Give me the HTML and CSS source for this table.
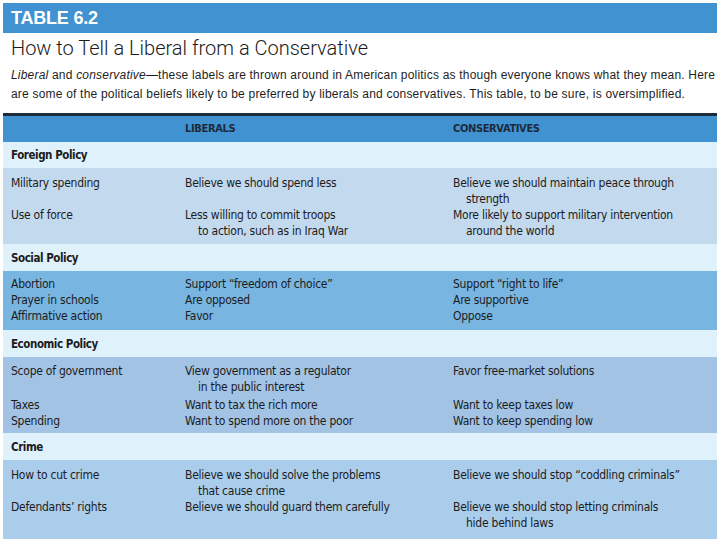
FILE: index.html
```html
<!DOCTYPE html>
<html>
<head>
<meta charset="utf-8">
<link rel="stylesheet" href="styles.css">
</head>
<body>
<div class="page">
  <div class="bar"><span class="bar-label">TABLE 6.2</span></div>
  <h1 class="title">How to Tell a Liberal from a Conservative</h1>
  <p class="intro"><em>Liberal</em> and <em>conservative</em>—these labels are thrown around in American politics as though everyone knows what they mean. Here<br>are some of the political beliefs likely to be preferred by liberals and conservatives. This table, to be sure, is oversimplified.</p>

  <div class="table">
    <div class="row head">
      <div></div><div>LIBERALS</div><div>CONSERVATIVES</div>
    </div>

    <div class="section">Foreign Policy</div>
    <div class="data foreign">
      <div class="row"><div>Military spending</div><div>Believe we should spend less</div><div class="hang">Believe we should maintain peace through<br>strength</div></div>
      <div class="row"><div>Use of force</div><div class="hang">Less willing to commit troops<br>to action, such as in Iraq War</div><div class="hang">More likely to support military intervention<br>around the world</div></div>
    </div>

    <div class="section">Social Policy</div>
    <div class="data social">
      <div class="row"><div>Abortion</div><div>Support “freedom of choice”</div><div>Support “right to life”</div></div>
      <div class="row"><div>Prayer in schools</div><div>Are opposed</div><div>Are supportive</div></div>
      <div class="row"><div>Affirmative action</div><div>Favor</div><div>Oppose</div></div>
    </div>

    <div class="section">Economic Policy</div>
    <div class="data economic">
      <div class="row gap"><div>Scope of government</div><div class="hang">View government as a regulator<br>in the public interest</div><div>Favor free-market solutions</div></div>
      <div class="row"><div>Taxes</div><div>Want to tax the rich more</div><div>Want to keep taxes low</div></div>
      <div class="row"><div>Spending</div><div>Want to spend more on the poor</div><div>Want to keep spending low</div></div>
    </div>

    <div class="section">Crime</div>
    <div class="data crime">
      <div class="row"><div>How to cut crime</div><div class="hang">Believe we should solve the problems<br>that cause crime</div><div>Believe we should stop “coddling criminals”</div></div>
      <div class="row"><div>Defendants’ rights</div><div>Believe we should guard them carefully</div><div class="hang">Believe we should stop letting criminals<br>hide behind laws</div></div>
    </div>
  </div>
</div>
</body>
</html>
```

FILE: styles.css
```css
* { box-sizing: border-box; }
html, body { margin: 0; padding: 0; background: #ffffff; }
.page { padding: 3px 3px 0 3px; width: 720px; }

.bar {
  background: #4192d0;
  height: 30px;
  display: flex;
  align-items: center;
  padding-left: 8px;
}
.bar-label {
  font-family: "Liberation Sans", Arial, sans-serif;
  font-weight: bold;
  font-size: 18px;
  color: #ffffff;
  letter-spacing: -0.2px;
}

.title {
  margin: 0;
  padding: 3px 0 0 8px;
  font-family: Roboto, "Liberation Sans", sans-serif;
  font-weight: 300;
  font-size: 20px;
  line-height: 24px;
  color: #1b1b1b;
}

.intro {
  margin: 0;
  padding: 6px 0 0 8px;
  font-family: "Liberation Sans", Arial, sans-serif;
  font-size: 12px;
  line-height: 19px;
  color: #1e1e1e;
  white-space: nowrap;
  letter-spacing: 0.2px;
}
.intro em { font-style: italic; }

.table {
  margin-top: 9px;
  border-top: 3px solid #1d2b3a;
  font-family: "DejaVu Sans Condensed", "DejaVu Sans", sans-serif;
  font-stretch: condensed;
  font-size: 12px;
  letter-spacing: -0.25px;
  line-height: 16px;
  color: #1c1c1c;
}

.row {
  display: grid;
  grid-template-columns: 174px 268px 1fr;
  padding-left: 8px;
}
.data .row { padding-left: 0; }

.head {
  background: #4192d0;
  height: 26px;
  align-items: center;
  font-weight: bold;
  font-size: 11px;
  letter-spacing: -0.35px;
  color: #1e2a3a;
}

.section {
  background: #dff1fb;
  height: 26px;
  padding-left: 8px;
  display: flex;
  align-items: center;
  font-weight: bold;
  font-size: 11.5px;
  letter-spacing: -0.45px;
}

.data { padding-left: 8px; }
.foreign { background: #c3d9ee; padding-top: 7px; padding-bottom: 5px; height: 76px; }
.social { background: #78b5e1; padding-top: 5px; padding-bottom: 6px; height: 59px; }
.economic { background: #a3c3e4; padding-top: 6px; padding-bottom: 4px; height: 76px; }
.crime { background: #abcdec; padding-top: 7px; padding-bottom: 7px; height: 79px; }
.section + .data + .section { height: 27px; }

.gap { margin-bottom: 2px; }

.hang {
  padding-left: 13px;
  text-indent: -13px;
}
```
